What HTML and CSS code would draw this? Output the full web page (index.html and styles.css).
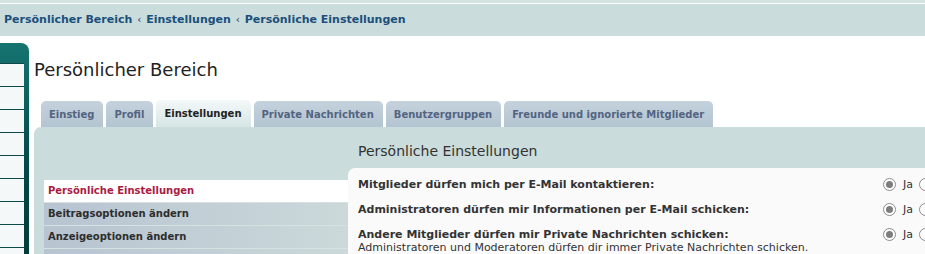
FILE: index.html
```html
<!DOCTYPE html>
<html lang="de">
<head>
<meta charset="UTF-8">
<title>Persönlicher Bereich</title>
<link rel="stylesheet" href="styles.css">
</head>
<body>

<div class="topstrip"></div>
<div class="breadcrumbs">
  <a href="#">Persönlicher Bereich</a>
  <span class="crumb-sep">‹</span>
  <a href="#">Einstellungen</a>
  <span class="crumb-sep">‹</span>
  <a href="#">Persönliche Einstellungen</a>
</div>

<div class="page">
  <div class="sidebar">
    <ul class="side-list">
      <li></li><li></li><li></li><li></li><li></li><li></li><li></li><li></li><li></li>
    </ul>
  </div>

  <div class="main">
    <h1 class="page-title">Persönlicher Bereich</h1>

    <ul class="tabs">
      <li class="tab">Einstieg</li>
      <li class="tab">Profil</li>
      <li class="tab active">Einstellungen</li>
      <li class="tab">Private Nachrichten</li>
      <li class="tab">Benutzergruppen</li>
      <li class="tab">Freunde und ignorierte Mitglieder</li>
    </ul>

    <div class="panel">
      <ul class="menu">
        <li class="menu-item active">Persönliche Einstellungen</li>
        <li class="menu-item">Beitragsoptionen ändern</li>
        <li class="menu-item">Anzeigeoptionen ändern</li>
        <li class="menu-item"></li>
      </ul>

      <div class="content">
        <h2 class="content-title">Persönliche Einstellungen</h2>
        <div class="box">
          <dl class="row">
            <dt>Mitglieder dürfen mich per E-Mail kontaktieren:</dt>
            <dd><span class="radio checked"></span>Ja<span class="radio"></span></dd>
          </dl>
          <dl class="row">
            <dt>Administratoren dürfen mir Informationen per E-Mail schicken:</dt>
            <dd><span class="radio checked"></span>Ja<span class="radio"></span></dd>
          </dl>
          <dl class="row">
            <dt>Andere Mitglieder dürfen mir Private Nachrichten schicken:<span class="explain">Administratoren und Moderatoren dürfen dir immer Private Nachrichten schicken.</span></dt>
            <dd><span class="radio checked"></span>Ja<span class="radio"></span></dd>
          </dl>
        </div>
      </div>
    </div>
  </div>
</div>

</body>
</html>
```

FILE: styles.css
```css
html, body {
  margin: 0;
  padding: 0;
  overflow: hidden;
}

body {
  width: 925px;
  height: 254px;
  background: #fff;
  font-family: "DejaVu Sans", Verdana, sans-serif;
  color: #333;
}

ul, dl, dd, h1, h2 {
  margin: 0;
  padding: 0;
  list-style: none;
}

.topstrip {
  height: 3px;
  background: #d5e2e2;
  border-bottom: 1px solid #fff;
}

.breadcrumbs {
  height: 32px;
  line-height: 31px;
  padding-left: 4px;
  background: #cadcdb;
  font-size: 11px;
  font-weight: bold;
}

.breadcrumbs a {
  color: #1b4f7c;
  text-decoration: none;
}

.crumb-sep {
  color: #536482;
  font-size: 10px;
  margin: 0 1px;
}

.page {
  display: flex;
  height: 218px;
  overflow: hidden;
}

.sidebar {
  flex: 0 0 29px;
  margin-top: 7px;
  background: linear-gradient(#157470, #034746 60%, #023d3c);
  border-top-right-radius: 8px;
}

.side-list {
  width: 24px;
  margin-top: 20px;
  background: #f5f8f8;
}

.side-list li {
  height: 22px;
  border-top: 1px solid #0a4a49;
}

.main {
  flex: 1;
  padding-left: 5px;
  min-width: 0;
}

.page-title {
  margin-top: 22px;
  font-size: 18px;
  line-height: 24px;
  font-weight: normal;
  color: #222;
}

.tabs {
  display: flex;
  gap: 3px;
  margin-top: 19px;
  padding-left: 7px;
}

.tab {
  height: 26px;
  line-height: 27px;
  padding: 0 9px 0 8px;
  font-size: 10px;
  font-weight: bold;
  color: #536482;
  background: linear-gradient(#c4d2dd, #b3c4d1);
  border-radius: 5px 5px 0 0;
}

.tab.active {
  color: #222;
  background: linear-gradient(#f4f8f9, #d6e5e5);
  height: 27px;
  margin-top: -1px;
  line-height: 27px;
}

.panel {
  display: flex;
  background: #cadcdb;
  border-top-left-radius: 7px;
  padding-left: 10px;
  height: 127px;
  overflow: hidden;
}

.menu {
  flex: 0 0 304px;
  margin-top: 53px;
}

.menu-item {
  height: 22px;
  line-height: 22px;
  padding-left: 4px;
  font-size: 10px;
  font-weight: bold;
  color: #2d2d2d;
  background: linear-gradient(to right, #b7c4d1, #cbd9da);
  border-bottom: 1px solid #d6e1e2;
}

.menu-item.active {
  color: #a91c44;
  background: #fff;
}

.content {
  flex: 1;
  min-width: 0;
}

.content-title {
  padding: 14px 10px 0;
  height: 27px;
  font-size: 14px;
  line-height: 20px;
  font-weight: normal;
  color: #333;
}

.box {
  background: #fafafa;
  border-top-left-radius: 7px;
  padding-top: 4px;
  height: 82px;
}

.row {
  display: flex;
  padding: 5px 10px;
  font-size: 11px;
  line-height: 15px;
  white-space: nowrap;
}

.row dt {
  flex: 0 0 525px;
  font-weight: bold;
}

.row dd {
  display: flex;
  align-items: center;
  height: 15px;
}

.explain {
  display: block;
  font-weight: normal;
  line-height: 11px;
}

.radio {
  display: inline-block;
  box-sizing: border-box;
  width: 13px;
  height: 13px;
  border: 1px solid #8c8c8c;
  border-radius: 50%;
  background: #fff;
  margin-right: 7px;
  position: relative;
}

.radio.checked::after {
  content: "";
  position: absolute;
  left: 2px;
  top: 2px;
  width: 7px;
  height: 7px;
  border-radius: 50%;
  background: #7d7d7d;
}

dd .radio:not(.checked) {
  margin-left: 6px;
}
```
